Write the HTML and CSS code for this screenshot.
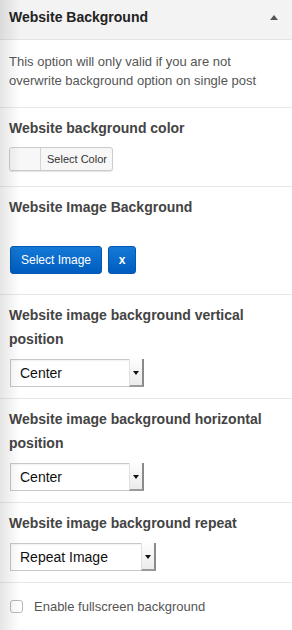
FILE: index.html
```html
<!DOCTYPE html>
<html>
<head>
<meta charset="utf-8">
<link rel="stylesheet" href="styles.css">
</head>
<body>
<div class="panel">
  <div class="header">
    <span class="title">Website Background</span>
    <span class="toggle"></span>
  </div>
  <div class="desc">This option will only valid if you are not overwrite background option on single post</div>
  <div class="section s-color">
    <div class="label">Website background color</div>
    <div class="color-btn"><span class="swatch"></span><span class="color-text">Select Color</span></div>
  </div>
  <div class="section s-image">
    <div class="label">Website Image Background</div>
    <div class="btn-row">
      <span class="btn-blue btn-select">Select Image</span>
      <span class="btn-blue btn-x">x</span>
    </div>
  </div>
  <div class="section">
    <div class="label">Website image background vertical position</div>
    <div class="select w134"><span class="sel-text">Center</span><span class="sel-arrow"></span></div>
  </div>
  <div class="section">
    <div class="label">Website image background horizontal position</div>
    <div class="select w134"><span class="sel-text">Center</span><span class="sel-arrow"></span></div>
  </div>
  <div class="section">
    <div class="label">Website image background repeat</div>
    <div class="select w146"><span class="sel-text">Repeat Image</span><span class="sel-arrow"></span></div>
  </div>
  <div class="check-row">
    <span class="checkbox"></span>
    <span class="check-text">Enable fullscreen background</span>
  </div>
</div>
</body>
</html>
```

FILE: styles.css
```css
html, body {
  margin: 0;
  padding: 0;
  background: #fff;
}
body {
  font-family: "Liberation Sans", Arial, sans-serif;
  width: 292px;
  height: 630px;
  overflow: hidden;
}
.panel {
  position: relative;
  min-height: 630px;
}
.panel::before {
  content: "";
  position: absolute;
  left: 0;
  top: 0;
  bottom: 0;
  width: 20px;
  background: linear-gradient(to right, rgba(0,0,0,0.10), rgba(0,0,0,0));
  pointer-events: none;
}
.header {
  height: 40px;
  box-sizing: border-box;
  background: #f3f3f3;
  border-bottom: 1px solid #e4e4e4;
  display: flex;
  justify-content: space-between;
  align-items: flex-start;
  padding: 7px 14px 0 9px;
}
.title {
  font-size: 14px;
  line-height: 20px;
  font-weight: bold;
  color: #222;
}
.toggle {
  margin-top: 8px;
  width: 0;
  height: 0;
  border-left: 4px solid transparent;
  border-right: 4px solid transparent;
  border-bottom: 5px solid #555;
}
.desc {
  padding: 12px 9px 17px;
  font-size: 13px;
  line-height: 19px;
  color: #555;
  border-bottom: 1px solid #e8e8e8;
}
.section {
  padding: 8px 9px 11px;
  border-bottom: 1px solid #e8e8e8;
}
.label {
  font-size: 14px;
  line-height: 24px;
  font-weight: bold;
  color: #444;
  margin-bottom: 8px;
}
.s-color {
  padding-top: 8px;
  padding-bottom: 15px;
}
.s-color .label {
  margin-bottom: 7px;
}
.color-btn {
  display: flex;
  width: 104px;
  height: 24px;
  box-sizing: border-box;
  border: 1px solid #ccc;
  border-radius: 3px;
  background: #f7f7f7;
  box-shadow: 0 1px 0 #e5e5e5;
  overflow: hidden;
}
.swatch {
  width: 30px;
  border-right: 1px solid #d4d4d4;
  background: #f7f7f7;
}
.color-text {
  padding-left: 6px;
  font-size: 11px;
  line-height: 22px;
  color: #333;
}
.s-image {
  padding-top: 8px;
  padding-bottom: 20px;
}
.s-image .label {
  margin-bottom: 27px;
}
.btn-row {
  display: flex;
  gap: 6px;
  padding-left: 1px;
}
.btn-blue {
  display: block;
  height: 28px;
  box-sizing: border-box;
  border: 1px solid #0058b0;
  border-radius: 3px;
  background: linear-gradient(to bottom, #1479d6, #005cc0);
  color: #fff;
  font-size: 12px;
  line-height: 26px;
  text-align: center;
}
.btn-select {
  width: 92px;
}
.btn-x {
  width: 28px;
  font-weight: bold;
}
.select {
  margin-left: 1px;
  display: flex;
  height: 28px;
  box-sizing: border-box;
  border: 1px solid #c8c8c8;
  background: #fff;
  box-shadow: inset 0 1px 2px rgba(0,0,0,0.06);
}
.w134 { width: 134px; }
.w146 { width: 146px; }
.sel-text {
  flex: 1;
  padding-left: 9px;
  font-size: 14px;
  line-height: 26px;
  color: #111;
}
.sel-arrow {
  position: relative;
  width: 12px;
  border-left: 1px solid #e0e0e0;
  border-right: 2px solid #8a8a8a;
  border-bottom: 2px solid #9a9a9a;
  background: linear-gradient(to bottom, #fdfdfd, #ececec);
  margin: -1px -1px -1px 0;
}
.sel-arrow::after {
  content: "";
  position: absolute;
  left: 3px;
  top: 12px;
  border-left: 3px solid transparent;
  border-right: 3px solid transparent;
  border-top: 4px solid #111;
}
.check-row {
  display: flex;
  align-items: center;
  padding: 16px 10px;
}
.checkbox {
  width: 13px;
  height: 13px;
  box-sizing: border-box;
  border: 1px solid #b8b8b8;
  border-radius: 3px;
  background: #fff;
}
.check-text {
  margin-left: 11px;
  font-size: 13px;
  color: #555;
}
```
